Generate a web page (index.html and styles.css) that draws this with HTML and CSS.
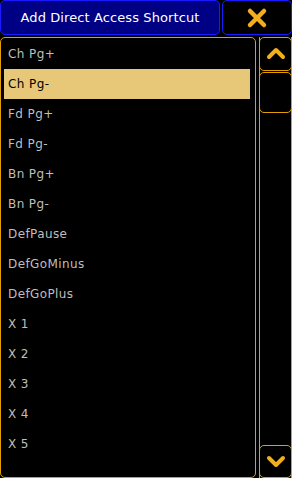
FILE: index.html
```html
<!DOCTYPE html>
<html lang="en">
<head>
    <meta charset="UTF-8">
    <meta name="viewport" content="width=device-width, initial-scale=1.0">
    <title>Add Direct Access Shortcut</title>
    <link rel="stylesheet" href="styles.css">
</head>
<body>
    <div class="dialog">
        <!-- Title bar -->
        <div class="title-row">
            <div class="title">Add Direct Access Shortcut</div>
            <div class="close-btn">
                <svg width="22" height="22" viewBox="0 0 22 22">
                    <path d="M4 4 L18 18 M18 4 L4 18" stroke="#f2ae1c" stroke-width="4.5" stroke-linecap="round" fill="none"/>
                </svg>
            </div>
        </div>

        <!-- List section -->
        <div class="main-row">
            <div class="list">
                <div class="item">Ch Pg+</div>
                <div class="item selected">Ch Pg-</div>
                <div class="item">Fd Pg+</div>
                <div class="item">Fd Pg-</div>
                <div class="item">Bn Pg+</div>
                <div class="item">Bn Pg-</div>
                <div class="item">DefPause</div>
                <div class="item">DefGoMinus</div>
                <div class="item">DefGoPlus</div>
                <div class="item">X 1</div>
                <div class="item">X 2</div>
                <div class="item">X 3</div>
                <div class="item">X 4</div>
                <div class="item">X 5</div>
            </div>

            <!-- Scrollbar -->
            <div class="scrollbar">
                <div class="scroll-btn up">
                    <svg width="20" height="14" viewBox="0 0 20 14">
                        <path d="M3 11 L10 4 L17 11" stroke="#f2ae1c" stroke-width="4" stroke-linecap="round" stroke-linejoin="round" fill="none"/>
                    </svg>
                </div>
                <div class="thumb"></div>
                <div class="track"></div>
                <div class="scroll-btn down">
                    <svg width="20" height="14" viewBox="0 0 20 14">
                        <path d="M3 3 L10 10 L17 3" stroke="#f2ae1c" stroke-width="4" stroke-linecap="round" stroke-linejoin="round" fill="none"/>
                    </svg>
                </div>
            </div>
        </div>
    </div>
</body>
</html>
```

FILE: styles.css
```css
body {
    margin: 0;
    padding: 0;
    background-color: #000;
    font-family: "DejaVu Sans", sans-serif;
}

.dialog {
    width: 292px;
    height: 478px;
    display: flex;
    flex-direction: column;
    gap: 2px;
}

.title-row {
    display: flex;
    gap: 2px;
    height: 35px;
}

.title {
    width: 220px;
    box-sizing: border-box;
    background-color: #000084;
    border: 1px solid #1a1aff;
    border-radius: 5px;
    color: #fff;
    font-size: 13px;
    letter-spacing: 0.1px;
    display: flex;
    align-items: center;
    justify-content: center;
}

.close-btn {
    flex: 1;
    box-sizing: border-box;
    border: 1px solid #1a1aff;
    border-radius: 5px;
    display: flex;
    align-items: center;
    justify-content: center;
}

.main-row {
    flex: 1;
    display: flex;
    gap: 3px;
}

.list {
    width: 256px;
    box-sizing: border-box;
    border: 1px solid #e0a000;
    border-radius: 5px;
    padding: 1px 5px 0 3px;
}

.item {
    height: 30px;
    line-height: 30px;
    padding-left: 4px;
    color: #bebebe;
    font-size: 12px;
    letter-spacing: 0.4px;
}

.item.selected {
    background-color: #e6c878;
    color: #000;
}

.scrollbar {
    flex: 1;
    box-sizing: border-box;
    border-left: 1px solid #e0a000;
    border-right: 1px solid #e0a000;
    display: flex;
    flex-direction: column;
}

.scroll-btn,
.thumb {
    box-sizing: border-box;
    border: 1px solid #e0a000;
    border-radius: 5px;
    margin: 0 -1px;
}

.scroll-btn {
    height: 34px;
    display: flex;
    align-items: center;
    justify-content: center;
}

.scroll-btn.up {
    padding-bottom: 3px;
}

.thumb {
    height: 41px;
    margin-top: 1px;
}

.track {
    flex: 1;
}

.scroll-btn.down {
    height: 33px;
}
```
